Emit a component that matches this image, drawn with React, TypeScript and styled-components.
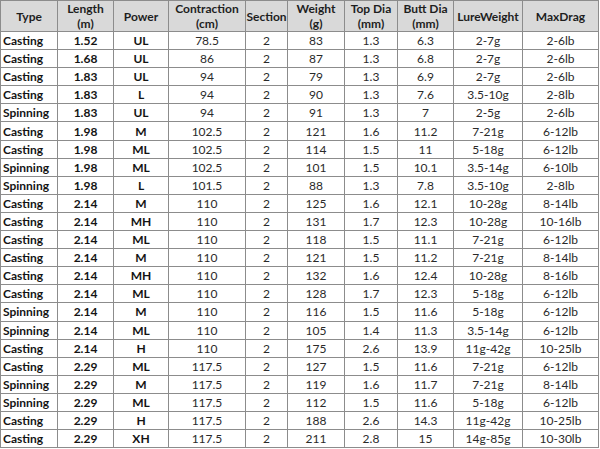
import styled, { createGlobalStyle } from "styled-components";

type Rod = {
  type: string;
  length: string;
  power: string;
  contraction: string;
  section: string;
  weight: string;
  topDia: string;
  buttDia: string;
  lure: string;
  drag: string;
};

const GlobalStyle = createGlobalStyle`
  html, body {
    margin: 0;
    padding: 0;
    background: #ffffff;
  }
  body {
    font-family: Lato, "Open Sans", "Liberation Sans", sans-serif;
    color: #1e1e1e;
  }
`;

const columns = [
  { key: "type", title: ["Type"], width: 57 },
  { key: "length", title: ["Length", "(m)"], width: 56 },
  { key: "power", title: ["Power"], width: 55 },
  { key: "contraction", title: ["Contraction", "(cm)"], width: 77 },
  { key: "section", title: ["Section"], width: 42 },
  { key: "weight", title: ["Weight", "(g)"], width: 57 },
  { key: "topDia", title: ["Top Dia", "(mm)"], width: 53 },
  { key: "buttDia", title: ["Butt Dia", "(mm)"], width: 56 },
  { key: "lure", title: ["LureWeight"], width: 69 },
  { key: "drag", title: ["MaxDrag"], width: 76 },
] as const;

const raw = `Casting|1.52|UL|78.5|2|83|1.3|6.3|2-7g|2-6lb
Casting|1.68|UL|86|2|87|1.3|6.8|2-7g|2-6lb
Casting|1.83|UL|94|2|79|1.3|6.9|2-7g|2-6lb
Casting|1.83|L|94|2|90|1.3|7.6|3.5-10g|2-8lb
Spinning|1.83|UL|94|2|91|1.3|7|2-5g|2-6lb
Casting|1.98|M|102.5|2|121|1.6|11.2|7-21g|6-12lb
Casting|1.98|ML|102.5|2|114|1.5|11|5-18g|6-12lb
Spinning|1.98|ML|102.5|2|101|1.5|10.1|3.5-14g|6-10lb
Spinning|1.98|L|101.5|2|88|1.3|7.8|3.5-10g|2-8lb
Casting|2.14|M|110|2|125|1.6|12.1|10-28g|8-14lb
Casting|2.14|MH|110|2|131|1.7|12.3|10-28g|10-16lb
Casting|2.14|ML|110|2|118|1.5|11.1|7-21g|6-12lb
Casting|2.14|M|110|2|121|1.5|11.2|7-21g|8-14lb
Casting|2.14|MH|110|2|132|1.6|12.4|10-28g|8-16lb
Casting|2.14|ML|110|2|128|1.7|12.3|5-18g|6-12lb
Spinning|2.14|M|110|2|116|1.5|11.6|5-18g|6-12lb
Spinning|2.14|ML|110|2|105|1.4|11.3|3.5-14g|6-12lb
Casting|2.14|H|110|2|175|2.6|13.9|11g-42g|10-25lb
Casting|2.29|ML|117.5|2|127|1.5|11.6|7-21g|6-12lb
Spinning|2.29|M|117.5|2|119|1.6|11.7|7-21g|8-14lb
Spinning|2.29|ML|117.5|2|112|1.5|11.6|5-18g|6-12lb
Casting|2.29|H|117.5|2|188|2.6|14.3|11g-42g|10-25lb
Casting|2.29|XH|117.5|2|211|2.8|15|14g-85g|10-30lb`;

const rods: Rod[] = raw.split("\n").map(line => {
  const [type, length, power, contraction, section, weight, topDia, buttDia, lure, drag] = line.split("|");
  return { type, length, power, contraction, section, weight, topDia, buttDia, lure, drag };
});

const SpecTable = styled.table`
  border-collapse: collapse;
  table-layout: fixed;
  width: 599px;
  font-size: 12px;
`;

const HeadCell = styled.th`
  height: 30px;
  padding: 0;
  background: #d9d9d9;
  border: 1px solid #8c8c8c;
  font-weight: 700;
  line-height: 15px;
  text-align: center;
  vertical-align: middle;
  white-space: nowrap;
  color: #1e1e1e;
`;

const HeadLine = styled.div`
  height: 15px;
  overflow: visible;
`;

const Cell = styled.td<{ $bold?: boolean; $left?: boolean }>`
  height: 17.1px;
  padding: 0 ${p => (p.$left ? "2px" : "0")};
  border: 1px solid #8c8c8c;
  font-weight: ${p => (p.$bold ? 700 : 400)};
  text-align: ${p => (p.$left ? "left" : "center")};
  line-height: 17px;
  white-space: nowrap;
  color: ${p => (p.$bold ? "#141414" : "#2a2a2a")};
`;

const App = () => {
  return (
    <>
      <GlobalStyle />
      <SpecTable>
        <colgroup>
          {columns.map(c => (
            <col key={c.key} style={{ width: c.width }} />
          ))}
        </colgroup>
        <thead>
          <tr>
            {columns.map(c => (
              <HeadCell key={c.key}>
                {c.title.map((t, i) => (
                  <HeadLine key={i}>{t}</HeadLine>
                ))}
              </HeadCell>
            ))}
          </tr>
        </thead>
        <tbody>
          {rods.map((rod, i) => (
            <tr key={i}>
              {columns.map((c, j) => (
                <Cell key={c.key} $bold={j < 3} $left={j === 0}>
                  {rod[c.key]}
                </Cell>
              ))}
            </tr>
          ))}
        </tbody>
      </SpecTable>
    </>
  );
};

export default App;
